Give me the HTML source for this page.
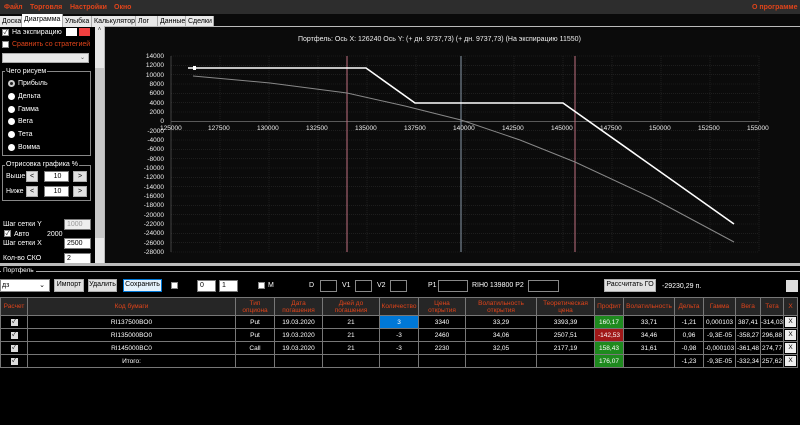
<!DOCTYPE html>
<html><head><meta charset="utf-8"><style>
*{box-sizing:border-box;margin:0;padding:0}
body{width:800px;height:425px;background:#000;font-family:"Liberation Sans","Noto Sans CJK SC",sans-serif;font-size:7px;color:#fff;position:relative;overflow:hidden}
.a{position:absolute}
.menu{left:0;top:0;width:800px;height:14px;background:#2d2d2d;color:#e0441a;font-weight:bold;font-size:7px}
.menu span{position:absolute;top:4px}
.tabs{left:0;top:14px;width:800px;height:13px;background:#0a0a0a}
.tab{position:absolute;top:2px;height:11px;background:#e8e8e8;color:#000;font-size:7px;padding:2px 2px 0;border-right:1px solid #aaa}
.btn{position:absolute;background:#e1e1e1;border:1px solid #adadad;color:#000;font-size:7px;text-align:center;line-height:10px}
.inp{position:absolute;background:#fff;color:#000;border:1px solid #7a7a7a;font-size:7px;line-height:9px;padding-left:2px}
.chk{position:absolute;width:7px;height:7px;background:#fff;border:1px solid #888;color:#000;font-size:6px;line-height:6px;text-align:center}
.rad{position:absolute;width:7px;height:7px;border-radius:50%;background:#fff}
table{position:absolute;left:0;top:297px;border-collapse:collapse;font-size:6.5px;width:797px;table-layout:fixed}
td{border:1px solid #777;text-align:center;height:13px;color:#fff;background:#000;padding:0}
tr.h td{background:#262626;color:#e0441a;height:18px;line-height:7px}
.cb{display:inline-block;width:7px;height:7px;background:#ddd;color:#000;font-size:6px;line-height:7px}
.xb{display:inline-block;width:11px;height:10px;background:#eee;color:#000;line-height:10px}
</style></head><body>
<div class="a menu"><span style="left:4px">Файл</span><span style="left:30px">Торговля</span><span style="left:70px">Настройки</span><span style="left:114px">Окно</span><span style="left:752px">О программе</span></div>
<div class="a tabs">
<div class="tab" style="left:0;width:22px">Доска</div>
<div class="tab" style="left:22px;width:41px;top:0;height:13px;background:#fff">Диаграмма</div>
<div class="tab" style="left:63px;width:29px">Улыбка</div>
<div class="tab" style="left:92px;width:44px">Калькулятор</div>
<div class="tab" style="left:136px;width:22px">Лог</div>
<div class="tab" style="left:158px;width:28px">Данные</div>
<div class="tab" style="left:186px;width:28px">Сделки</div>
</div>
<div class="a" style="left:0;top:27px;width:95px;height:236px;background:#000"></div>
<div class="chk" style="left:2px;top:29px">✓</div><div class="a" style="left:12px;top:29px">На экспирацию</div>
<div class="a" style="left:66px;top:28px;width:11px;height:8px;background:#fff"></div>
<div class="a" style="left:79px;top:28px;width:11px;height:8px;background:#f04040"></div>
<div class="chk" style="left:2px;top:41px"></div><div class="a" style="left:12px;top:41px;color:#e0441a">Сравнить со стратегией</div>
<div class="a" style="left:2px;top:53px;width:87px;height:10px;background:#e8e8e8;border:1px solid #aaa;color:#555;text-align:right;padding-right:3px;font-size:6px">⌄</div>
<div class="a" style="left:2px;top:71px;width:89px;height:85px;border:1px solid #888"></div>
<div class="a" style="left:5px;top:68px;background:#000;padding:0 1px">Чего рисуем</div>
<div class="rad" style="left:8px;top:80px;border:2px solid #ccc;background:#222"></div><div class="a" style="left:18px;top:80px">Прибыль</div>
<div class="rad" style="left:8px;top:93px"></div><div class="a" style="left:18px;top:93px">Дельта</div>
<div class="rad" style="left:8px;top:106px"></div><div class="a" style="left:18px;top:106px">Гамма</div>
<div class="rad" style="left:8px;top:118px"></div><div class="a" style="left:18px;top:118px">Вега</div>
<div class="rad" style="left:8px;top:131px"></div><div class="a" style="left:18px;top:131px">Тета</div>
<div class="rad" style="left:8px;top:144px"></div><div class="a" style="left:18px;top:144px">Вомма</div>
<div class="a" style="left:2px;top:165px;width:89px;height:36px;border:1px solid #888"></div>
<div class="a" style="left:5px;top:161px;background:#000;padding:0 1px">Отрисовка графика %</div>
<div class="a" style="left:6px;top:173px">Выше</div><div class="btn" style="left:26px;top:171px;width:12px;height:11px">&lt;</div><div class="inp" style="left:44px;top:171px;width:25px;height:11px;text-align:center">10</div><div class="btn" style="left:73px;top:171px;width:14px;height:11px">&gt;</div>
<div class="a" style="left:6px;top:188px">Ниже</div><div class="btn" style="left:26px;top:186px;width:12px;height:11px">&lt;</div><div class="inp" style="left:44px;top:186px;width:25px;height:11px;text-align:center">10</div><div class="btn" style="left:73px;top:186px;width:14px;height:11px">&gt;</div>
<div class="a" style="left:3px;top:221px">Шаг сетки Y</div><div class="inp" style="left:64px;top:219px;width:27px;height:11px;background:#eee;color:#999">1000</div>
<div class="chk" style="left:4px;top:230px">✓</div><div class="a" style="left:14px;top:231px">Авто</div><div class="a" style="left:47px;top:231px">2000</div>
<div class="a" style="left:3px;top:240px">Шаг сетки X</div><div class="inp" style="left:64px;top:238px;width:27px;height:11px">2500</div>
<div class="a" style="left:3px;top:255px">Кол-во СКО</div><div class="inp" style="left:64px;top:253px;width:27px;height:11px">2</div>
<div class="a" style="left:95px;top:27px;width:9px;height:236px;background:#e8e8e8;color:#333;font-size:6px;text-align:center">˄</div>
<div class="a" style="left:95px;top:68px;width:9px;height:170px;background:#c8c8c8"></div>
<div class="a" style="left:104px;top:26px;width:696px;height:238px;background:#0b0b0b;border-top:1px solid #bbb;border-left:1px solid #bbb"></div>
<div class="a" style="left:298px;top:36px;font-size:7px;color:#eee">Портфель: Ось X: 126240 Ось Y:  (+ дн. 9737,73)  (+ дн. 9737,73)  (На экспирацию 11550)</div>
<svg class="a" style="left:0;top:0" width="800" height="265">
<g stroke="#2a2a2a" stroke-width="0.6" stroke-dasharray="1 1">
<line x1="171" y1="56" x2="759" y2="56"/><line x1="171" y1="65.3" x2="759" y2="65.3"/><line x1="171" y1="74.7" x2="759" y2="74.7"/><line x1="171" y1="84" x2="759" y2="84"/><line x1="171" y1="93.3" x2="759" y2="93.3"/><line x1="171" y1="102.7" x2="759" y2="102.7"/><line x1="171" y1="112" x2="759" y2="112"/>
<line x1="171" y1="130.7" x2="759" y2="130.7"/><line x1="171" y1="140" x2="759" y2="140"/><line x1="171" y1="149.3" x2="759" y2="149.3"/><line x1="171" y1="158.7" x2="759" y2="158.7"/><line x1="171" y1="168" x2="759" y2="168"/><line x1="171" y1="177.3" x2="759" y2="177.3"/><line x1="171" y1="186.7" x2="759" y2="186.7"/><line x1="171" y1="196" x2="759" y2="196"/><line x1="171" y1="205.3" x2="759" y2="205.3"/><line x1="171" y1="214.7" x2="759" y2="214.7"/><line x1="171" y1="224" x2="759" y2="224"/><line x1="171" y1="233.3" x2="759" y2="233.3"/><line x1="171" y1="242.7" x2="759" y2="242.7"/><line x1="171" y1="252" x2="759" y2="252"/>
<line x1="220" y1="56" x2="220" y2="252"/><line x1="269" y1="56" x2="269" y2="252"/><line x1="318" y1="56" x2="318" y2="252"/><line x1="367" y1="56" x2="367" y2="252"/><line x1="416" y1="56" x2="416" y2="252"/><line x1="465" y1="56" x2="465" y2="252"/><line x1="514" y1="56" x2="514" y2="252"/><line x1="563" y1="56" x2="563" y2="252"/><line x1="612" y1="56" x2="612" y2="252"/><line x1="661" y1="56" x2="661" y2="252"/><line x1="710" y1="56" x2="710" y2="252"/><line x1="759" y1="56" x2="759" y2="252"/>
</g>
<line x1="171" y1="121.3" x2="759" y2="121.3" stroke="#888" stroke-width="0.6"/>
<line x1="171" y1="56" x2="171" y2="252" stroke="#666" stroke-width="0.6"/>
<line x1="347" y1="56" x2="347" y2="252" stroke="#c07080" stroke-width="1"/>
<line x1="461" y1="56" x2="461" y2="252" stroke="#8899aa" stroke-width="1"/>
<line x1="575" y1="56" x2="575" y2="252" stroke="#c07080" stroke-width="1"/>
<path d="M193 76 L270 83 L347 93 L405 106 L461 120 L520 140 L575 162 L650 197 L734 242" fill="none" stroke="#888" stroke-width="1"/>
<path d="M188 68 L366 68 L415 103 L563 103 L734 224" fill="none" stroke="#fff" stroke-width="1.6"/>
<rect x="193" y="66" width="3" height="4" fill="#fff"/>
</svg>
<div class="a" style="left:0;top:0;width:800px;height:265px;font-size:6.5px;color:#eee">
<div class="a" style="left:140px;top:52px;line-height:9.33px;text-align:right;width:24px">14000<br>12000<br>10000<br>8000<br>6000<br>4000<br>2000<br>0<br>-2000<br>-4000<br>-6000<br>-8000<br>-10000<br>-12000<br>-14000<br>-16000<br>-18000<br>-20000<br>-22000<br>-24000<br>-26000<br>-28000</div>
<div class="a" style="left:160px;top:125px;width:620px">
<span class="a" style="left:0">125000</span><span class="a" style="left:48px">127500</span><span class="a" style="left:97px">130000</span><span class="a" style="left:146px">132500</span><span class="a" style="left:195px">135000</span><span class="a" style="left:244px">137500</span><span class="a" style="left:293px">140000</span><span class="a" style="left:342px">142500</span><span class="a" style="left:391px">145000</span><span class="a" style="left:440px">147500</span><span class="a" style="left:489px">150000</span><span class="a" style="left:538px">152500</span><span class="a" style="left:587px">155000</span>
</div></div>
<div class="a" style="left:0;top:263px;width:800px;height:3px;background:#bbb"></div>
<div class="a" style="left:0;top:271px;width:800px;height:1px;background:#aaa"></div>
<div class="a" style="left:1px;top:267px;background:#000;padding:0 2px;font-size:6.5px">Портфель</div>
<div class="a" style="left:0;top:279px;width:50px;height:13px;background:#fff;border:1px solid #888;color:#000;padding-left:1px;line-height:11px">дз<span style="float:right;margin-right:4px">⌄</span></div>
<div class="btn" style="left:54px;top:279px;width:30px;height:13px">Импорт</div>
<div class="btn" style="left:88px;top:279px;width:29px;height:13px">Удалить</div>
<div class="btn" style="left:123px;top:279px;width:39px;height:13px;border-color:#0078d7;background:#e5f1fb">Сохранить</div>
<div class="chk" style="left:171px;top:282px"></div>
<div class="inp" style="left:197px;top:280px;width:19px;height:12px">0</div>
<div class="inp" style="left:219px;top:280px;width:19px;height:12px">1</div>
<div class="chk" style="left:258px;top:282px"></div><div class="a" style="left:268px;top:282px">M</div>
<div class="a" style="left:309px;top:282px">D</div><div class="a" style="left:320px;top:280px;width:17px;height:12px;border:1px solid #888"></div>
<div class="a" style="left:342px;top:282px">V1</div><div class="a" style="left:355px;top:280px;width:17px;height:12px;border:1px solid #888"></div>
<div class="a" style="left:377px;top:282px">V2</div><div class="a" style="left:390px;top:280px;width:17px;height:12px;border:1px solid #888"></div>
<div class="a" style="left:428px;top:282px">P1</div><div class="a" style="left:438px;top:280px;width:30px;height:12px;border:1px solid #888"></div>
<div class="a" style="left:472px;top:282px">RIH0 139800  P2</div><div class="a" style="left:528px;top:280px;width:31px;height:12px;border:1px solid #888"></div>
<div class="btn" style="left:604px;top:279px;width:52px;height:13px">Рассчитать ГО</div>
<div class="a" style="left:662px;top:283px">-29230,29 п.</div>
<div class="a" style="left:786px;top:280px;width:12px;height:12px;background:#ddd"></div>
<table>
<colgroup><col style="width:27px"><col style="width:208px"><col style="width:39px"><col style="width:48px"><col style="width:57px"><col style="width:39px"><col style="width:47px"><col style="width:71px"><col style="width:58px"><col style="width:29px"><col style="width:51px"><col style="width:29px"><col style="width:32px"><col style="width:25px"><col style="width:23px"><col style="width:14px"></colgroup>
<tr class="h"><td>Расчет</td><td>Код бумаги</td><td>Тип<br>опциона</td><td>Дата<br>погашения</td><td>Дней до<br>погашения</td><td>Количество</td><td>Цена<br>открытия</td><td>Волатильность<br>открытия</td><td>Теоретическая<br>цена</td><td>Профит</td><td>Волатильность</td><td>Дельта</td><td>Гамма</td><td>Вега</td><td>Тета</td><td>X</td></tr>
<tr><td><span class="cb">✓</span></td><td>RI137500BO0</td><td>Put</td><td>19.03.2020</td><td>21</td><td style="background:#0078d7">3</td><td>3340</td><td>33,29</td><td>3393,39</td><td style="background:#1e8a1e">160,17</td><td>33,71</td><td>-1,21</td><td>0,000103</td><td>387,41</td><td>-314,03</td><td><span class="xb">X</span></td></tr>
<tr><td><span class="cb">✓</span></td><td>RI135000BO0</td><td>Put</td><td>19.03.2020</td><td>21</td><td>-3</td><td>2460</td><td>34,06</td><td>2507,51</td><td style="background:#a01818">-142,53</td><td>34,46</td><td>0,96</td><td>-9,3E-05</td><td>-358,27</td><td>296,88</td><td><span class="xb">X</span></td></tr>
<tr><td><span class="cb">✓</span></td><td>RI145000BC0</td><td>Call</td><td>19.03.2020</td><td>21</td><td>-3</td><td>2230</td><td>32,05</td><td>2177,19</td><td style="background:#1e8a1e">158,43</td><td>31,61</td><td>-0,98</td><td>-0,000103</td><td>-361,48</td><td>274,77</td><td><span class="xb">X</span></td></tr>
<tr><td><span class="cb">✓</span></td><td>Итого:</td><td></td><td></td><td></td><td></td><td></td><td></td><td></td><td style="background:#1e8a1e">176,07</td><td></td><td>-1,23</td><td>-9,3E-05</td><td>-332,34</td><td>257,62</td><td><span class="xb">X</span></td></tr>
</table>
</body></html>
